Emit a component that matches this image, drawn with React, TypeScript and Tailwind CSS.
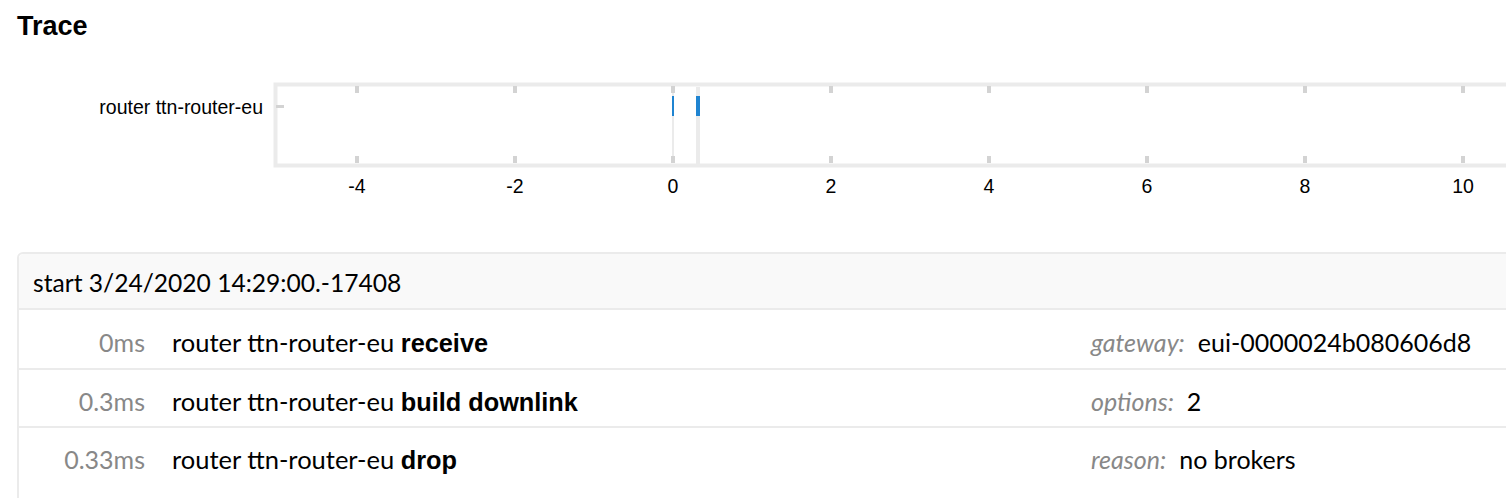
import React from "react";

const ticks = [-4, -2, 0, 2, 4, 6, 8, 10];
const x0 = 673; // x of value 0
const unit = 79;

function Chart() {
  return (
    <svg width={1506} height={150} className="block" style={{ fontFamily: '"Liberation Sans", Arial, sans-serif' }}>
      <rect x={275.5} y={24.5} width={1300} height={81} fill="none" stroke="#ebebeb" strokeWidth={4} />
      <rect x={276} y={45} width={8} height={3} fill="#d3d3d3" />
      <text x={263} y={54} textAnchor="end" fontSize={19.5} fill="#000">router ttn-router-eu</text>
      {ticks.map((t) => {
        const x = x0 + t * unit;
        return (
          <g key={t}>
            <rect x={x - 2} y={26} width={4} height={7} fill="#d3d3d3" />
            <rect x={x - 2} y={96} width={4} height={7} fill="#d3d3d3" />
            <text x={x} y={133} textAnchor="middle" fontSize={19.5} fill="#000">{t}</text>
          </g>
        );
      })}
      <rect x={672} y={33} width={2} height={63} fill="#ebebeb" />
      <rect x={696} y={27} width={4} height={77} fill="#ebebeb" />
      <rect x={672} y={36} width={2} height={20} fill="#1f84d1" />
      <rect x={696} y={36} width={4} height={20} fill="#1f84d1" />
    </svg>
  );
}

const rows = [
  { t: "0ms", ev: "receive", k: "gateway:", v: "eui-0000024b080606d8" },
  { t: "0.3ms", ev: "build downlink", k: "options:", v: "2" },
  { t: "0.33ms", ev: "drop", k: "reason:", v: "no brokers" },
];

export default function App() {
  return (
    <div className="w-[1506px] h-[498px] overflow-hidden bg-white relative">
      <h1
        className="pl-[17px] pt-[11px] text-[27px] font-bold leading-[30px] text-black"
        style={{ fontFamily: '"Liberation Sans", Arial, sans-serif' }}
      >
        Trace
      </h1>
      <div className="mt-[19px]">
        <Chart />
      </div>
      <div
        className="ml-[17px] mt-[42px] w-[1560px] rounded-[6px] border-2 border-[#ebebeb] text-[25px] text-black"
        style={{ fontFamily: 'Lato, "Noto Sans", sans-serif' }}
      >
        <div className="h-[56px] bg-[#f9f9f9] flex items-center pl-[14px] pt-[5px] text-[24.6px] border-b-2 border-[#ebebeb] rounded-t-[5px]">
          start 3/24/2020 14:29:00.-17408
        </div>
        {rows.map((r, i) => (
          <div
            key={r.t}
            className={`h-[58px] flex items-center pt-[8px] ${i > 0 ? "border-t-2 border-[#ebebeb]" : ""}`}
          >
            <div className="w-[126px] text-right text-[#888888]">{r.t}</div>
            <div className="w-[946px] pl-[27px] text-[25.5px]">
              router ttn-router-eu{" "}
              <span
                className="font-bold text-[25.3px]"
                style={{ fontFamily: '"Liberation Sans", Arial, sans-serif' }}
              >
                {r.ev}
              </span>
            </div>
            <div className="flex items-center">
              <span className="italic text-[#888888]">{r.k}</span>
              <span className="ml-[13px]">{r.v}</span>
            </div>
          </div>
        ))}
        <div className="h-[40px]" />
      </div>
    </div>
  );
}
